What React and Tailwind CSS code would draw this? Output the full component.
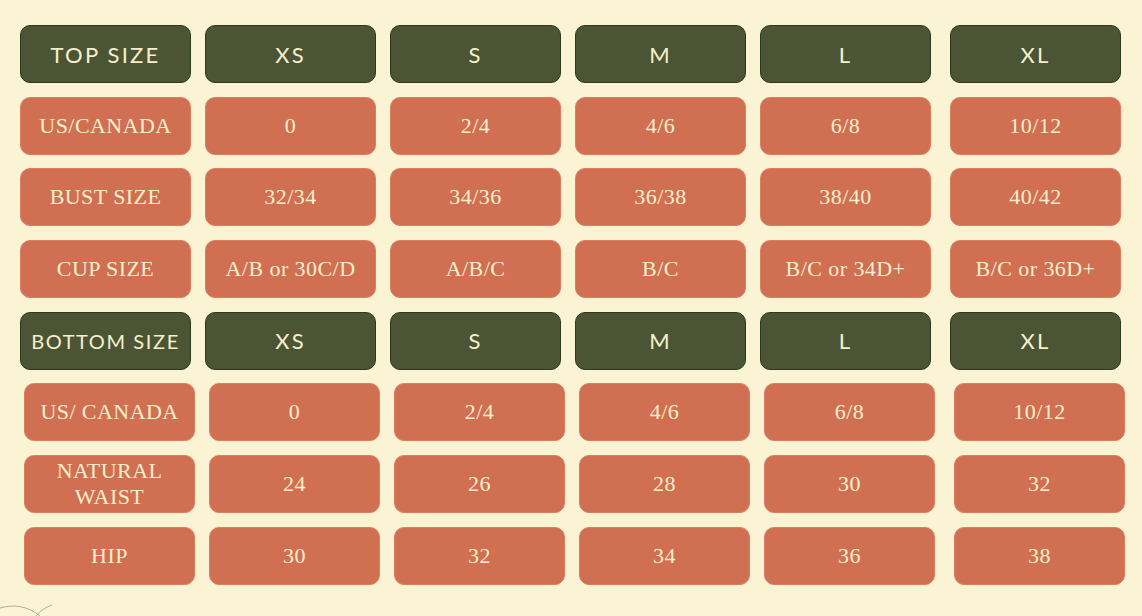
const topRows = [
  ["US/CANADA", "0", "2/4", "4/6", "6/8", "10/12"],
  ["BUST SIZE", "32/34", "34/36", "36/38", "38/40", "40/42"],
  ["CUP SIZE", "A/B or 30C/D", "A/B/C", "B/C", "B/C or 34D+", "B/C or 36D+"],
];

const bottomRows = [
  ["US/ CANADA", "0", "2/4", "4/6", "6/8", "10/12"],
  [
    <>
      NATURAL
      <br />
      WAIST
    </>,
    "24",
    "26",
    "28",
    "30",
    "32",
  ],
  ["HIP", "30", "32", "34", "36", "38"],
];

const sizes = ["XS", "S", "M", "L", "XL"];

function HeadCell({ children, last, small }) {
  return (
    <div
      className={[
        "flex h-[58px] w-[171px] shrink-0 items-center justify-center whitespace-nowrap",
        "rounded-[10px] border border-[#2c3a1c] bg-[#4b5535] text-[#f7efcc]",
        "font-['Lato',sans-serif] font-normal",
        small ? "text-[20px] tracking-[0.08em]" : "text-[22px] tracking-[0.1em]",
        last ? "ml-[5px]" : "",
      ].join(" ")}
    >
      {children}
    </div>
  );
}

function Cell({ children, last }) {
  return (
    <div
      className={[
        "flex h-[58px] w-[171px] shrink-0 items-center justify-center text-center whitespace-nowrap",
        "rounded-[10px] border border-[#dd7e61] bg-[#d06f52] text-[#f8efcd]",
        "font-['Liberation_Serif',serif] text-[22px] leading-[26px] tracking-[0.02em]",
        last ? "ml-[5px]" : "",
      ].join(" ")}
    >
      {children}
    </div>
  );
}

function HeadRow({ title, small }) {
  return (
    <div className="flex gap-[14px]">
      <HeadCell small={small}>{title}</HeadCell>
      {sizes.map((s, i) => (
        <HeadCell key={s} last={i === sizes.length - 1}>
          {s}
        </HeadCell>
      ))}
    </div>
  );
}

function DataRow({ row }) {
  return (
    <div className="flex gap-[14px]">
      {row.map((v, i) => (
        <Cell key={i} last={i === row.length - 1}>
          {v}
        </Cell>
      ))}
    </div>
  );
}

export default function App() {
  return (
    <div className="relative h-[616px] w-[1142px] overflow-hidden bg-[#faf3d4]">
      <div className="flex flex-col gap-[13.7px] pt-[25px]">
        {/* Top sizes */}
        <div className="flex flex-col gap-[13.7px] pl-[20px]">
          <HeadRow title="TOP SIZE" />
          {topRows.map((r) => (
            <DataRow key={r[0]} row={r} />
          ))}
          <HeadRow title="BOTTOM SIZE" small />
        </div>

        {/* Bottom sizes */}
        <div className="flex flex-col gap-[13.7px] pl-[24px]">
          {bottomRows.map((r, i) => (
            <DataRow key={i} row={r} />
          ))}
        </div>
      </div>

      {/* faint doodle, bottom left */}
      <svg
        className="absolute bottom-0 left-0"
        width="60"
        height="18"
        viewBox="0 0 60 18"
        fill="none"
      >
        <path d="M0 10c14-4 28-2 40 8" stroke="#9a9a8a" strokeWidth="0.8" />
        <path d="M36 18c4-5 10-9 16-11" stroke="#9a9a8a" strokeWidth="0.8" />
      </svg>
    </div>
  );
}
